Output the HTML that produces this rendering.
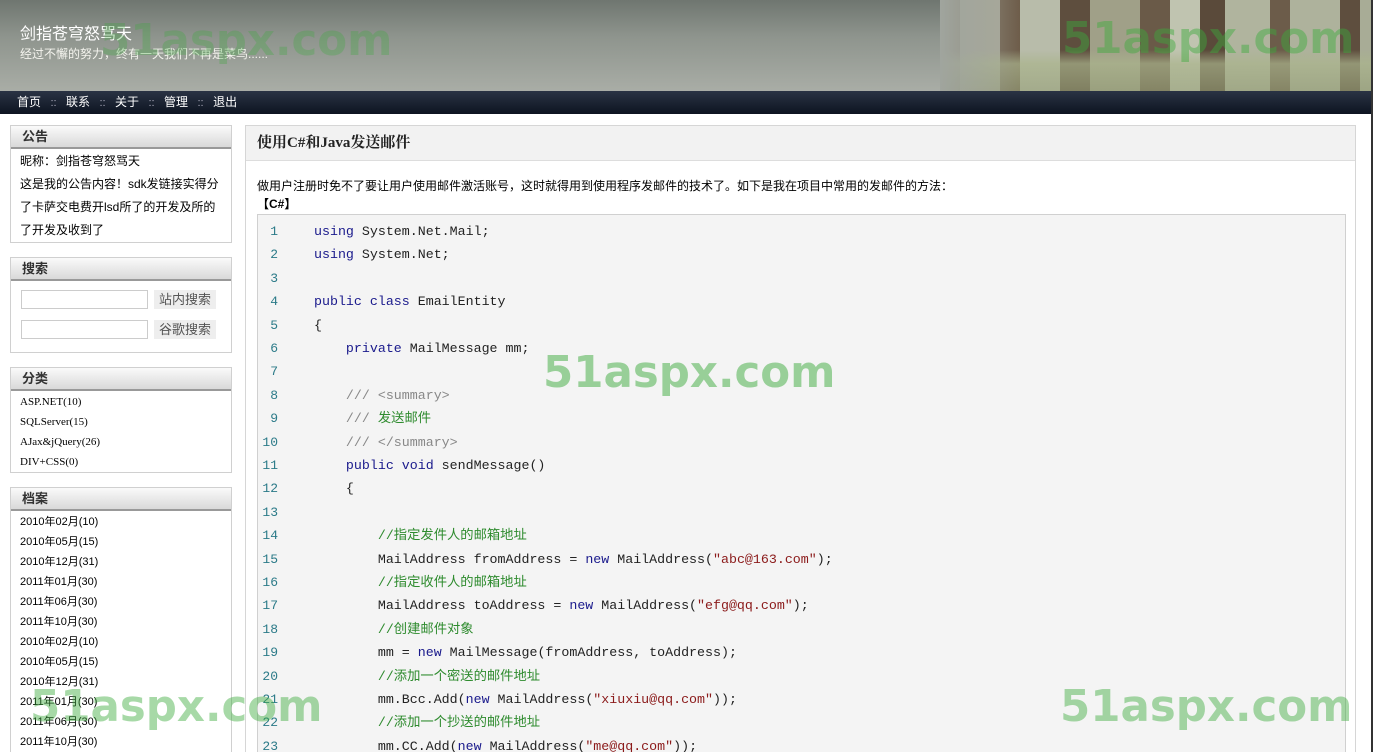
<!DOCTYPE html>
<html><head><meta charset="utf-8">
<style>
*{margin:0;padding:0;box-sizing:border-box}
html,body{width:1373px;height:752px;overflow:hidden}
body{background:#fff;font-family:"Liberation Sans","Noto Sans CJK SC",sans-serif;font-size:12px;color:#000;position:relative}
.hdr{position:absolute;left:0;top:0;width:1373px;height:91px;background:linear-gradient(#6f7670,#8e948d 40%,#a9ada6);}
.forest{position:absolute;left:940px;top:0;width:433px;height:91px;background:
linear-gradient(90deg,rgba(160,165,158,1) 0,rgba(160,165,158,0) 80px),
linear-gradient(rgba(0,0,0,0) 55%,rgba(170,180,140,.7) 70%,rgba(150,160,120,.6)),
linear-gradient(90deg,#8a8270 0 20px,#a8a898 20px 60px,#6e5d4a 60px 80px,#b8bcaa 80px 120px,#5e4e3e 120px 150px,#a0a088 150px 200px,#6a5a48 200px 230px,#c0c4b0 230px 260px,#5a4a3a 260px 285px,#b0b49e 285px 330px,#6c5c4a 330px 350px,#aeb29c 350px 400px,#5e4e3e 400px 420px,#a8ac96 420px)}
.t1{position:absolute;left:20px;top:20px;color:#fff;font-size:16px}
.t2{position:absolute;left:20px;top:45px;color:#f4f4ee;font-size:12px}
.nav{position:absolute;left:0;top:91px;width:1371px;height:23px;background:linear-gradient(#2a3344,#0d1421);color:#fff;font-size:12px;line-height:23px;padding-left:17px}
.nav i{font-style:normal;color:#aab;font-size:11px;display:inline-block;width:25px;text-align:center}
.edge{position:absolute;left:1371px;top:0;width:2px;height:752px;background:#333}
.box{position:absolute;left:10px;width:222px;border:1px solid #d0d0d0;background:#fff}
.bh{height:23px;background:linear-gradient(#fafafa,#d9d9d9);border-bottom:2px solid #999;font-weight:bold;font-size:13px;color:#333;line-height:22px;padding-left:11px}
.notice{padding:1px 0 0 9px;font-size:12px;line-height:23px}
.cat{padding:1px 0 0 9px;font-family:"Liberation Serif","Noto Serif CJK SC",serif;font-size:11px;line-height:20px;height:100%;overflow:hidden}
.srow{height:30px;position:relative}
.srow input{position:absolute;left:10px;top:9px;width:127px;height:19px;border:1px solid #ccc}
.srow span{position:absolute;left:143px;top:9px;background:#eee;color:#555;padding:0 5px;height:19px;line-height:19px;font-size:13px}
.main{position:absolute;left:245px;top:125px;width:1111px;height:627px;border:1px solid #d6d6d6;border-bottom:none;background:#fff;overflow:hidden}
.mt{height:35px;background:#f2f2f2;border-bottom:1px solid #ddd;font-weight:bold;font-size:15px;color:#222;line-height:34px;padding-left:11px;font-family:"Liberation Serif","Noto Serif CJK SC",serif}
.intro{position:absolute;left:11px;top:51px;font-size:12px}
.lab{position:absolute;left:11px;top:69px;font-size:12px;font-weight:bold}
.code{position:absolute;left:11px;top:88px;width:1089px;height:539px;background:#f4f4f4;border:1px solid #d0d0d0;border-bottom:none;font-family:"Liberation Mono","Noto Sans CJK SC",monospace;font-size:13.3px;color:#222;overflow:hidden}
.ln{position:absolute;left:0;height:23.4px;line-height:23.4px;white-space:pre}
.n{position:absolute;left:0;width:20px;text-align:right;color:#2b7a88;font-size:13px}
.c{position:absolute;left:56px}
.k{color:#1a1a8c}.s{color:#8b1a1a}.g{color:#2e8b2e}.d{color:#888}
.wm{position:absolute;font-family:"DejaVu Sans","Liberation Sans",sans-serif;font-weight:bold;font-size:43.5px;color:rgba(60,170,60,.45);line-height:1}
</style></head><body>
<div class="hdr"><div class="forest"></div>
<div class="t1">剑指苍穹怒骂天</div>
<div class="t2">经过不懈的努力，终有一天我们不再是菜鸟......</div></div>
<div class="nav">首页<i>::</i>联系<i>::</i>关于<i>::</i>管理<i>::</i>退出</div>

<div class="box" style="top:125px;height:118px"><div class="bh">公告</div>
<div class="notice">昵称：剑指苍穹怒骂天<br>这是我的公告内容！sdk发链接实得分<br>了卡萨交电费开lsd所了的开发及所的<br>了开发及收到了</div></div>

<div class="box" style="top:257px;height:96px"><div class="bh">搜索</div>
<div class="srow"><input><span>站内搜索</span></div>
<div class="srow"><input><span>谷歌搜索</span></div></div>

<div class="box" style="top:367px;height:106px"><div class="bh">分类</div>
<div class="cat">ASP.NET(10)<br>SQLServer(15)<br>AJax&amp;jQuery(26)<br>DIV+CSS(0)</div></div>

<div class="box" style="top:487px;height:265px;border-bottom:none;overflow:hidden"><div class="bh">档案</div>
<div class="cat" style="font-family:'Liberation Sans','Noto Sans CJK SC',sans-serif">2010年02月(10)<br>2010年05月(15)<br>2010年12月(31)<br>2011年01月(30)<br>2011年06月(30)<br>2011年10月(30)<br>2010年02月(10)<br>2010年05月(15)<br>2010年12月(31)<br>2011年01月(30)<br>2011年06月(30)<br>2011年10月(30)</div></div>

<div class="main"><div class="mt">使用C#和Java发送邮件</div>
<div class="intro">做用户注册时免不了要让用户使用邮件激活账号，这时就得用到使用程序发邮件的技术了。如下是我在项目中常用的发邮件的方法：</div>
<div class="lab">【C#】</div>
<div class="code">
<div class="ln" style="top:5px"><span class="n">1</span><span class="c"><span class="k">using</span> System.Net.Mail;</span></div>
<div class="ln" style="top:28.4px"><span class="n">2</span><span class="c"><span class="k">using</span> System.Net;</span></div>
<div class="ln" style="top:51.8px"><span class="n">3</span></div>
<div class="ln" style="top:75.2px"><span class="n">4</span><span class="c"><span class="k">public class</span> EmailEntity</span></div>
<div class="ln" style="top:98.6px"><span class="n">5</span><span class="c">{</span></div>
<div class="ln" style="top:122px"><span class="n">6</span><span class="c">    <span class="k">private</span> MailMessage mm;</span></div>
<div class="ln" style="top:145.4px"><span class="n">7</span></div>
<div class="ln" style="top:168.8px"><span class="n">8</span><span class="c">    <span class="d">/// &lt;summary&gt;</span></span></div>
<div class="ln" style="top:192.2px"><span class="n">9</span><span class="c">    <span class="d">///</span> <span class="g">发送邮件</span></span></div>
<div class="ln" style="top:215.6px"><span class="n">10</span><span class="c">    <span class="d">/// &lt;/summary&gt;</span></span></div>
<div class="ln" style="top:239px"><span class="n">11</span><span class="c">    <span class="k">public void</span> sendMessage()</span></div>
<div class="ln" style="top:262.4px"><span class="n">12</span><span class="c">    {</span></div>
<div class="ln" style="top:285.8px"><span class="n">13</span></div>
<div class="ln" style="top:309.2px"><span class="n">14</span><span class="c">        <span class="g">//指定发件人的邮箱地址</span></span></div>
<div class="ln" style="top:332.6px"><span class="n">15</span><span class="c">        MailAddress fromAddress = <span class="k">new</span> MailAddress(<span class="s">"abc@163.com"</span>);</span></div>
<div class="ln" style="top:356px"><span class="n">16</span><span class="c">        <span class="g">//指定收件人的邮箱地址</span></span></div>
<div class="ln" style="top:379.4px"><span class="n">17</span><span class="c">        MailAddress toAddress = <span class="k">new</span> MailAddress(<span class="s">"efg@qq.com"</span>);</span></div>
<div class="ln" style="top:402.8px"><span class="n">18</span><span class="c">        <span class="g">//创建邮件对象</span></span></div>
<div class="ln" style="top:426.2px"><span class="n">19</span><span class="c">        mm = <span class="k">new</span> MailMessage(fromAddress, toAddress);</span></div>
<div class="ln" style="top:449.6px"><span class="n">20</span><span class="c">        <span class="g">//添加一个密送的邮件地址</span></span></div>
<div class="ln" style="top:473px"><span class="n">21</span><span class="c">        mm.Bcc.Add(<span class="k">new</span> MailAddress(<span class="s">"xiuxiu@qq.com"</span>));</span></div>
<div class="ln" style="top:496.4px"><span class="n">22</span><span class="c">        <span class="g">//添加一个抄送的邮件地址</span></span></div>
<div class="ln" style="top:519.8px"><span class="n">23</span><span class="c">        mm.CC.Add(<span class="k">new</span> MailAddress(<span class="s">"me@qq.com"</span>));</span></div>
</div></div>
<div class="edge"></div>
<div class="wm" style="left:100px;top:20px;color:rgba(60,170,60,.3)">51aspx.com</div>
<div class="wm" style="left:1062px;top:18px">51aspx.com</div>
<div class="wm" style="left:543px;top:352px;color:rgba(60,170,60,.5)">51aspx.com</div>
<div class="wm" style="left:30px;top:686px">51aspx.com</div>
<div class="wm" style="left:1060px;top:686px">51aspx.com</div>
</body></html>
